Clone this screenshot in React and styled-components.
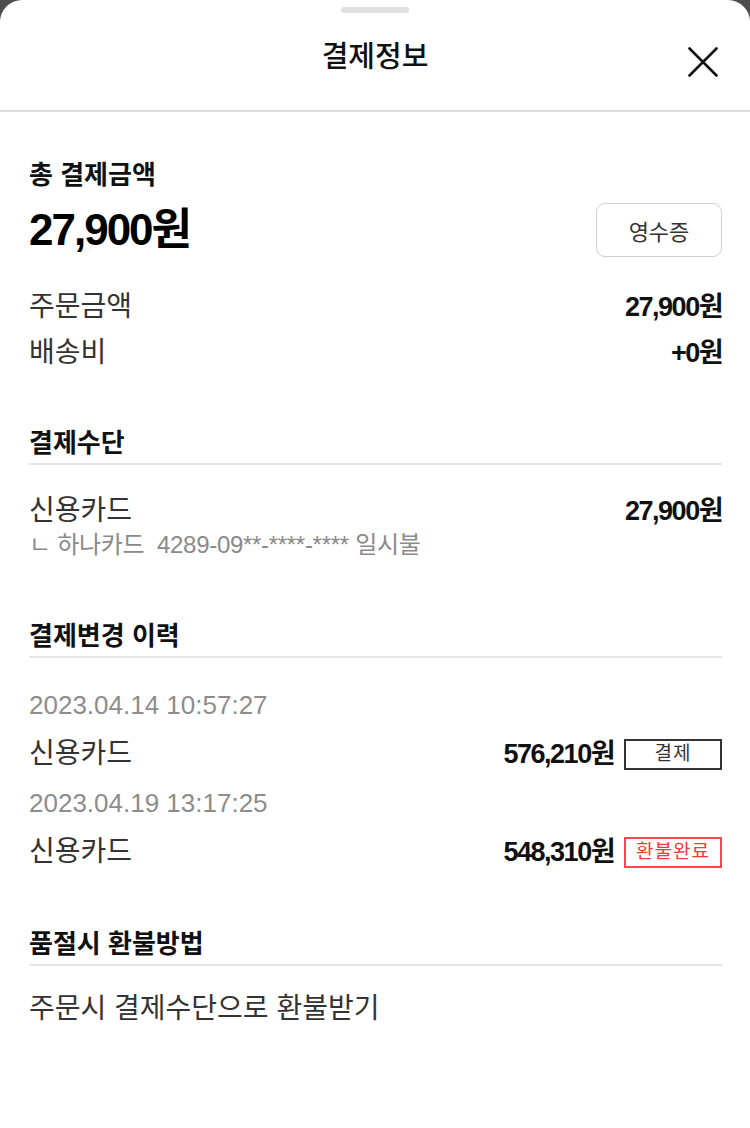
import styled, { createGlobalStyle } from "styled-components";

const GlobalStyle = createGlobalStyle`
  html, body {
    margin: 0;
    padding: 0;
    background: #4d4d4d;
  }
  body {
    font-family: "Liberation Sans", "Noto Sans CJK KR", sans-serif;
    color: #222;
  }
`;

const Sheet = styled.div`
  min-height: 1128px;
  background: #fff;
  border-radius: 22px 22px 0 0;
  overflow: hidden;
`;

const Grabber = styled.div`
  width: 68px;
  height: 6px;
  margin: 7px auto 0;
  border-radius: 3px;
  background: #e0e0e0;
`;

const Header = styled.header`
  height: 97px;
  display: grid;
  grid-template-columns: 1fr auto 1fr;
  align-items: center;
  border-bottom: 2px solid #dcdcdc;
`;

const Title = styled.h1`
  grid-column: 2;
  margin: 0 0 9px;
  font-size: 29px;
  font-weight: 500;
  line-height: 34px;
  color: #111;
`;

const CloseButton = styled.button`
  grid-column: 3;
  justify-self: end;
  width: 30px;
  height: 30px;
  margin: 0 32px 0 0;
  padding: 0;
  border: 0;
  background: none;
  color: #111;
  display: flex;
`;

const Content = styled.main`
  padding: 0 28px 40px 29px;
`;

const Section = styled.section`
  margin-top: ${(p) => p.$top || 0}px;
`;

const SectionTitle = styled.h2`
  margin: 0;
  font-size: 26px;
  font-weight: 700;
  line-height: 30px;
  color: #111;
  padding-bottom: ${(p) => (p.$divider ? 5 : 0)}px;
  border-bottom: ${(p) => (p.$divider ? "2px solid #e6e6e6" : "none")};
`;

const TotalRow = styled.div`
  display: flex;
  align-items: center;
  justify-content: space-between;
  margin-top: 13px;
`;

const TotalAmount = styled.div`
  font-size: 44px;
  font-weight: 700;
  letter-spacing: -2px;
  color: #000;
  line-height: 54px;
`;

const ReceiptButton = styled.button`
  width: 126px;
  height: 54px;
  border: 1.5px solid #cfcfcf;
  border-radius: 9px;
  background: #fff;
  font-family: "Liberation Sans", "Noto Sans CJK KR", sans-serif;
  font-size: 22px;
  color: #333;
`;

const List = styled.div`
  margin-top: ${(p) => p.$top || 0}px;
`;

const Row = styled.div`
  display: flex;
  align-items: center;
  justify-content: space-between;
  height: ${(p) => p.$h || 46}px;
`;

const Label = styled.span`
  font-size: 28px;
  line-height: 34px;
  color: #333;
`;

const Amount = styled.span`
  display: flex;
  align-items: center;
  gap: 10px;
  font-size: 27px;
  line-height: 34px;
  font-weight: 700;
  letter-spacing: -1.5px;
  color: #111;
`;

const SubInfo = styled.div`
  font-size: 24px;
  line-height: 34px;
  letter-spacing: -0.3px;
  color: #8a8a8a;
`;

const DateText = styled.div`
  font-size: 26px;
  line-height: 40px;
  color: #8d8d8d;
`;

const Badge = styled.span`
  box-sizing: border-box;
  width: 98px;
  height: 31px;
  display: inline-flex;
  align-items: center;
  justify-content: center;
  font-size: 19px;
  font-weight: 400;
  letter-spacing: 1px;
  color: ${(p) => (p.$tone === "red" ? "#f23a3a" : "#333")};
  border: 2px solid ${(p) => (p.$tone === "red" ? "#f5494d" : "#333")};
`;

const Plain = styled.p`
  margin: 28px 0 0;
  font-size: 28px;
  line-height: 30px;
  color: #333;
`;

function CloseIcon() {
  return (
    <svg width="30" height="30" viewBox="0 0 30 30" fill="none">
      <path d="M1.5 1.5 L28.5 28.5 M28.5 1.5 L1.5 28.5" stroke="currentColor" strokeWidth="2.6" strokeLinecap="round" />
    </svg>
  );
}

const history = [
  { date: "2023.04.14 10:57:27", method: "신용카드", amount: "576,210원", status: "결제", tone: "dark" },
  { date: "2023.04.19 13:17:25", method: "신용카드", amount: "548,310원", status: "환불완료", tone: "red" },
];

function App() {
  return (
    <Sheet>
      <GlobalStyle />
      <Grabber />
      <Header>
        <Title>결제정보</Title>
        <CloseButton aria-label="닫기">
          <CloseIcon />
        </CloseButton>
      </Header>
      <Content>
        <Section $top={48}>
          <SectionTitle>총 결제금액</SectionTitle>
          <TotalRow>
            <TotalAmount>27,900원</TotalAmount>
            <ReceiptButton>영수증</ReceiptButton>
          </TotalRow>
          <List $top={27}>
            <Row>
              <Label>주문금액</Label>
              <Amount>27,900원</Amount>
            </Row>
            <Row>
              <Label>배송비</Label>
              <Amount>+0원</Amount>
            </Row>
          </List>
        </Section>

        <Section $top={52}>
          <SectionTitle $divider>결제수단</SectionTitle>
          <List $top={29}>
            <Row $h={34}>
              <Label>신용카드</Label>
              <Amount>27,900원</Amount>
            </Row>
            <SubInfo>ㄴ 하나카드&nbsp; 4289-09**-****-**** 일시불</SubInfo>
          </List>
        </Section>

        <Section $top={59}>
          <SectionTitle $divider>결제변경 이력</SectionTitle>
          <List $top={27}>
            {history.map((h) => (
              <div key={h.date}>
                <DateText>{h.date}</DateText>
                <Row $h={58}>
                  <Label>{h.method}</Label>
                  <Amount>
                    {h.amount}
                    <Badge $tone={h.tone}>{h.status}</Badge>
                  </Amount>
                </Row>
              </div>
            ))}
          </List>
        </Section>

        <Section $top={48}>
          <SectionTitle $divider>품절시 환불방법</SectionTitle>
          <Plain>주문시 결제수단으로 환불받기</Plain>
        </Section>
      </Content>
    </Sheet>
  );
}

export default App;
